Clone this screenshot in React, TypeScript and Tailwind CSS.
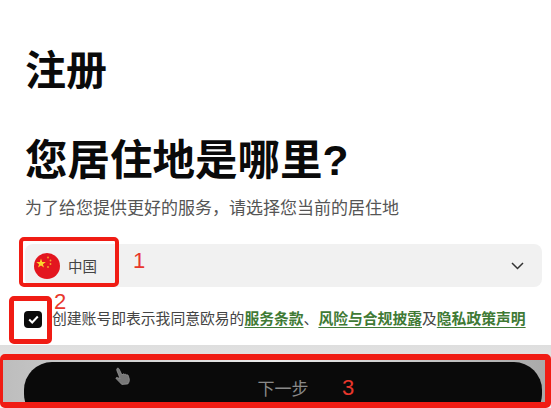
import React from "react";

export default function App() {
  return (
    <div className="relative w-[551px] h-[408px] overflow-hidden bg-white flex flex-col font-['Noto_Sans_CJK_SC','Liberation_Sans',sans-serif]">
      <div className="flex flex-col pl-[25px] pr-[9px] pt-[42px]">
        <h1 className="text-[41px] leading-[50px] font-bold text-[#0a0a0a]">注册</h1>
        <h2 className="mt-[41px] text-[42.500px] leading-[56px] font-bold text-[#0a0a0a] font-['Liberation_Sans','Noto_Sans_CJK_SC',sans-serif]">您居住地是哪里?</h2>
        <p className="mt-[4px] text-[17px] leading-[28px] text-[#555]">为了给您提供更好的服务，请选择您当前的居住地</p>
        <div className="mt-[23px] h-[43px] rounded-[8px] bg-[#f1f1f1] flex items-center pl-[9px] pr-[18px]">
          <svg width="26" height="26" viewBox="0 0 26 26" className="shrink-0">
            <circle cx="13" cy="13" r="13" fill="#e3161f" />
            <polygon points="7,5.500 8.200,9 11.800,9 8.900,11.200 10,14.600 7,12.500 4,14.600 5.100,11.200 2.200,9 5.800,9" fill="#fbd52c" />
            <circle cx="14" cy="4.500" r="0.9" fill="#f5a82e" />
            <circle cx="16.500" cy="7.500" r="0.9" fill="#f5a82e" />
            <circle cx="16.500" cy="11" r="0.9" fill="#f5a82e" />
            <circle cx="14" cy="14" r="0.9" fill="#f5a82e" />
          </svg>
          <span className="ml-[8px] text-[14.500px] text-[#444]">中国</span>
          <svg width="13" height="8" viewBox="0 0 13 8" fill="none" className="ml-auto">
            <path d="M1 1l5.500 5.500L12 1" stroke="#333" strokeWidth="1.500" />
          </svg>
        </div>
        <div className="mt-[20px] flex items-center h-[24px] -ml-[1px] gap-[10px]">
          <div className="w-[18px] h-[17px] rounded-[4px] bg-[#0a0a0a] flex items-center justify-center shrink-0">
            <svg width="11" height="9" viewBox="0 0 11 9" fill="none">
              <path d="M1.200 4.500l3 3L9.800 1.500" stroke="#fff" strokeWidth="2" />
            </svg>
          </div>
          <p className="-mt-[2px] text-[14.800px] leading-[24px] text-[#444] whitespace-nowrap">
            创建账号即表示我同意欧易的
            <span className="text-[#3f7a35] font-semibold underline underline-offset-[3px]">服务条款</span>
            、
            <span className="text-[#3f7a35] font-semibold underline underline-offset-[3px]">风险与合规披露</span>
            及
            <span className="text-[#3f7a35] font-semibold underline underline-offset-[3px]">隐私政策声明</span>
          </p>
        </div>
      </div>
      <div className="mt-auto h-[63px] pt-[9px] bg-gradient-to-b from-[#dedede] to-[#f4f4f4]">
        <div className="h-[54px] border-t-[6px] border-b-[6px] border-l-[3px] border-r-[6px] border-[#f01c14] rounded-[5px] overflow-hidden bg-gradient-to-r from-[#bdbdbd] via-[#ececec] to-[#a9a9a9] pt-[2px] pl-[21px] pr-[3px]">
          <div className="h-[60px] rounded-[28px] bg-[#0a0a0a] flex justify-center">
            <span className="text-[17px] leading-[50px] text-[#8a8a8a] mt-[1px]">下一步</span>
          </div>
        </div>
      </div>
      {/* annotations drawn over the screen */}
      <div className="absolute left-[19px] top-[237px] w-[100px] h-[50px] border-[4px] border-[#f01c14] rounded-[5px]" />
      <div className="absolute left-[9px] top-[296px] w-[43px] h-[48px] border-[5px] border-[#f01c14] rounded-[5px]" />
      <span className="absolute left-[133px] top-[247px] text-[22px] leading-[28px] text-[#e8372c] font-['Liberation_Sans']">1</span>
      <span className="absolute left-[54px] top-[288px] text-[22px] leading-[28px] text-[#e8372c] font-['Liberation_Sans']">2</span>
      <span className="absolute left-[342px] top-[374px] text-[22px] leading-[28px] text-[#e8372c] font-['Liberation_Sans']">3</span>
      <svg width="22" height="20" viewBox="0 0 22 20" className="absolute left-[113px] top-[367px]">
        <path d="M4 1.500c1-.8 2 0 2.400 1L9 8l1-1c.8-.4 1.500 0 1.800.5.600-.4 1.400-.2 1.800.4.700-.3 1.400 0 1.700.6l1 3.500c.3 2-.3 3.500-1.500 5l-6 .5c-1.500-1.500-3.500-4-5.500-5.500-.7-.7-.3-1.800.8-1.500L7 11.500 3.800 3.500c-.2-.8-.2-1.500.2-2z" fill="#777" stroke="#aaa" strokeWidth="0.6" />
      </svg>
    </div>
  );
}
